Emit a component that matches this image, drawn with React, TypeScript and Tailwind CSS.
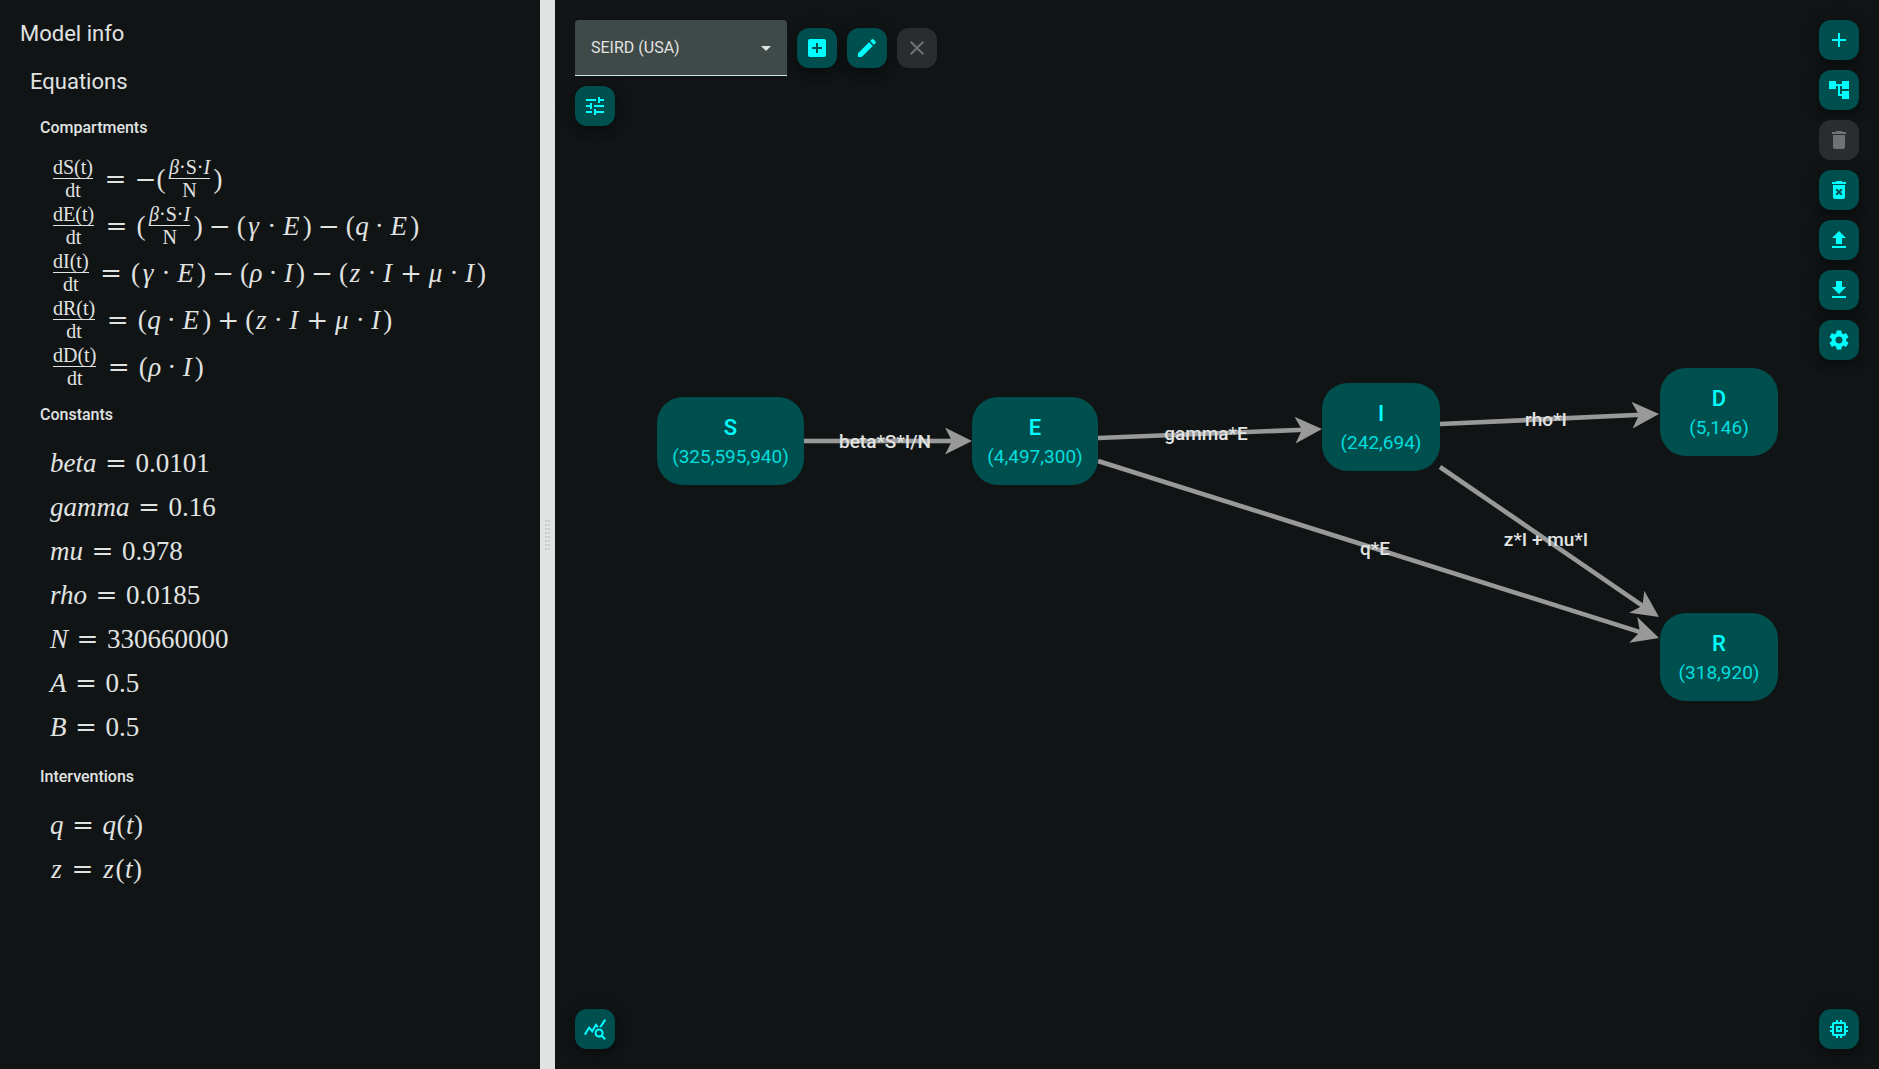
import type { ReactNode } from "react";
import {
  MdAccountTree,
  MdAdd,
  MdAddBox,
  MdArrowDropDown,
  MdClose,
  MdDelete,
  MdDeleteForever,
  MdDownload,
  MdEdit,
  MdMemory,
  MdQueryStats,
  MdSettings,
  MdTune,
  MdUpload,
} from "react-icons/md";

/* ---------- Math ---------- */

const variableWidths: Record<string, string> = {
  E: "min-w-[22px]",
  I: "min-w-[14px]",
  γ: "min-w-[15px]",
  μ: "min-w-4",
};

const operator = "w-[21px] text-center text-[26px] font-[DejaVu_Math_TeX_Gyre,DejaVu_Sans,sans-serif]";

function Symbol({ char }: { char: string }) {
  if (char === "=") return <span className={`${operator} mx-[9px]`}>=</span>;
  if (char === "+" || char === "−") return <span className={`${operator} mx-[6px]`}>{char}</span>;
  if (char === "~") return <span className={operator}>−</span>;
  if (char === "·") return <span className="mx-[6px] w-[7px] text-center">·</span>;
  if (char === "(" || char === ")") return <span className="w-[10px] text-center">{char}</span>;
  return <i className={`text-center ${variableWidths[char] ?? "min-w-[13px]"}`}>{char}</i>;
}

function Symbols({ text }: { text: string }) {
  return (
    <>
      {[...text].map((char, i) => (
        <Symbol key={i} char={char} />
      ))}
    </>
  );
}

function Fraction({ top, bottom }: { top: ReactNode; bottom: ReactNode }) {
  return (
    <span className="mx-[3px] inline-flex flex-col pt-px text-center text-[20px]">
      <span className="border-b border-[#e1e3e2] leading-[21px]">{top}</span>
      <span className="leading-[22px]">{bottom}</span>
    </span>
  );
}

const infectionRate = (
  <Fraction
    top={
      <>
        <i>β</i>·S·<i>I</i>
      </>
    }
    bottom="N"
  />
);

const compartments: { name: string; right: ReactNode }[] = [
  { name: "S", right: <><Symbols text="~(" />{infectionRate}<Symbols text=")" /></> },
  { name: "E", right: <><Symbols text="(" />{infectionRate}<Symbols text=")−(γ·E)−(q·E)" /></> },
  { name: "I", right: <Symbols text="(γ·E)−(ρ·I)−(z·I+μ·I)" /> },
  { name: "R", right: <Symbols text="(q·E)+(z·I+μ·I)" /> },
  { name: "D", right: <Symbols text="(ρ·I)" /> },
];

const constants = [
  ["beta", "0.0101"],
  ["gamma", "0.16"],
  ["mu", "0.978"],
  ["rho", "0.0185"],
  ["N", "330660000"],
  ["A", "0.5"],
  ["B", "0.5"],
];

const mathRow = "flex items-center whitespace-nowrap font-[Liberation_Serif,serif] text-[27px] leading-[30px]";

function ModelInfo() {
  return (
    <aside className="w-[540px] shrink-0 overflow-auto px-5 pt-[18px]">
      <h1 className="text-[22px] leading-8">Model info</h1>
      <section className="pl-[10px] pt-4">
        <h2 className="text-[22px] leading-8">Equations</h2>
        <section className="pl-[10px] pt-[18px]">
          <h3 className="text-base font-medium leading-6">Compartments</h3>
          <div className="pl-[10px] pt-[15px]">
            {compartments.map((c) => (
              <div key={c.name} className={`${mathRow} h-[47px]`}>
                <Fraction top={`d${c.name}(t)`} bottom="dt" />
                <Symbol char="=" />
                {c.right}
              </div>
            ))}
          </div>
        </section>
        <section className="pl-[10px] pt-[13px]">
          <h3 className="text-base font-medium leading-6">Constants</h3>
          <div className="pl-[10px] pt-[14px]">
            {constants.map(([name, value]) => (
              <div key={name} className={`${mathRow} h-11`}>
                <i>{name}</i>
                <Symbol char="=" />
                <span>{value}</span>
              </div>
            ))}
          </div>
        </section>
        <section className="pl-[10px] pt-4">
          <h3 className="text-base font-medium leading-6">Interventions</h3>
          <div className="pl-[10px] pt-[14px]">
            {["q", "z"].map((name) => (
              <div key={name} className={`${mathRow} h-11`}>
                <Symbols text={`${name}=${name}(`} />
                <i>t</i>
                <Symbol char=")" />
              </div>
            ))}
          </div>
        </section>
      </section>
    </aside>
  );
}

/* ---------- Splitter ---------- */

function Splitter() {
  return (
    <div role="separator" aria-orientation="vertical" className="flex w-[15px] shrink-0 cursor-col-resize items-center justify-center bg-[#e1e3e2]">
      <div className="grid grid-cols-2 gap-x-px gap-y-[2px]">
        {Array.from({ length: 16 }, (_, i) => (
          <span key={i} className="size-[2px] bg-[#c9cbca]" />
        ))}
      </div>
    </div>
  );
}

/* ---------- Graph ---------- */

const nodes = [
  { id: "S", value: "325,595,940", x: 102, y: 397, w: 147 },
  { id: "E", value: "4,497,300", x: 417, y: 397, w: 126 },
  { id: "I", value: "242,694", x: 767, y: 383, w: 118 },
  { id: "D", value: "5,146", x: 1105, y: 368, w: 118 },
  { id: "R", value: "318,920", x: 1105, y: 613, w: 118 },
];

const edges = [
  { label: "beta*S*I/N", x1: 249, y1: 441, x2: 417, y2: 441, lx: 330, ly: 442 },
  { label: "gamma*E", x1: 543, y1: 438, x2: 767, y2: 429, lx: 651, ly: 434 },
  { label: "q*E", x1: 543, y1: 461, x2: 1104, y2: 638, lx: 820, ly: 549 },
  { label: "rho*I", x1: 885, y1: 424, x2: 1104, y2: 414, lx: 991, ly: 420 },
  { label: "z*I + mu*I", x1: 885, y1: 467, x2: 1104, y2: 617, lx: 991, ly: 540 },
];

function Graph() {
  return (
    <div className="absolute inset-0 overflow-hidden">
      <svg className="absolute inset-0 h-full w-full" aria-hidden="true">
        {edges.map((e) => {
          const length = Math.hypot(e.x2 - e.x1, e.y2 - e.y1);
          const angle = (Math.atan2(e.y2 - e.y1, e.x2 - e.x1) * 180) / Math.PI;
          return (
            <g key={e.label} transform={`translate(${e.x1} ${e.y1}) rotate(${angle})`} fill="#999999">
              <rect x="0" y="-2.3" width={length - 18} height="4.6" />
              <path transform={`translate(${length} 0)`} d="M0 0 L-27 -13.4 L-20 0 L-27 13.4 Z" />
            </g>
          );
        })}
      </svg>
      {edges.map((e) => (
        <span
          key={e.label}
          className="absolute -translate-x-1/2 -translate-y-1/2 whitespace-nowrap text-[19px] font-medium leading-6"
          style={{ left: e.lx, top: e.ly }}
        >
          {e.label}
        </span>
      ))}
      {nodes.map((n) => (
        <div
          key={n.id}
          className="absolute flex h-[88px] flex-col items-center justify-center rounded-[26px] bg-[#004f4f] pt-px"
          style={{ left: n.x, top: n.y, width: n.w }}
        >
          <span className="text-[22px] font-medium leading-[30px] text-[#00ffff]">{n.id}</span>
          <span className="text-[19px] leading-7 text-[#00dddd]">({n.value})</span>
        </div>
      ))}
    </div>
  );
}

/* ---------- Controls ---------- */

function IconButton({ label, disabled, children }: { label: string; disabled?: boolean; children: ReactNode }) {
  return (
    <button
      type="button"
      aria-label={label}
      disabled={disabled}
      className="pointer-events-auto flex size-10 shrink-0 items-center justify-center rounded-xl bg-[#004f4f] text-2xl text-[#00ffff] shadow-[0_3px_5px_-1px_rgba(0,0,0,0.2),0_6px_10px_0_rgba(0,0,0,0.14),0_1px_18px_0_rgba(0,0,0,0.12)] disabled:bg-[#2a2d2e] disabled:text-[#6f7272] disabled:shadow-none"
    >
      {children}
    </button>
  );
}

function Controls() {
  return (
    <div className="pointer-events-none relative flex h-full justify-between p-5">
      <div className="flex flex-col items-start justify-between">
        <div className="flex flex-col items-start gap-[10px]">
          <div className="flex items-center gap-[10px]">
            <div className="pointer-events-auto relative">
              <select
                aria-label="Model"
                defaultValue="seird"
                className="h-14 w-[212px] appearance-none rounded-t border-b border-[#cce8e7] bg-[#3f4948] px-4 text-base text-[#e1e3e2] outline-none"
              >
                <option value="seird">SEIRD (USA)</option>
              </select>
              <MdArrowDropDown className="pointer-events-none absolute right-[9px] top-4 size-6" />
            </div>
            <IconButton label="Add model"><MdAddBox /></IconButton>
            <IconButton label="Edit model"><MdEdit /></IconButton>
            <IconButton label="Remove model" disabled><MdClose /></IconButton>
          </div>
          <IconButton label="Adjust parameters"><MdTune /></IconButton>
        </div>
        <IconButton label="Show charts"><MdQueryStats /></IconButton>
      </div>
      <div className="flex flex-col justify-between">
        <div className="flex flex-col gap-[10px]">
          <IconButton label="Add compartment"><MdAdd /></IconButton>
          <IconButton label="Arrange graph"><MdAccountTree /></IconButton>
          <IconButton label="Delete selected" disabled><MdDelete /></IconButton>
          <IconButton label="Delete all"><MdDeleteForever /></IconButton>
          <IconButton label="Upload"><MdUpload /></IconButton>
          <IconButton label="Download"><MdDownload /></IconButton>
          <IconButton label="Settings"><MdSettings /></IconButton>
        </div>
        <IconButton label="Simulation"><MdMemory /></IconButton>
      </div>
    </div>
  );
}

export default function App() {
  return (
    <div className="flex h-screen overflow-hidden bg-[#101415] font-[Roboto,sans-serif] text-[#e1e3e2]">
      <ModelInfo />
      <Splitter />
      <main className="relative min-w-0 flex-1">
        <Graph />
        <Controls />
      </main>
    </div>
  );
}
